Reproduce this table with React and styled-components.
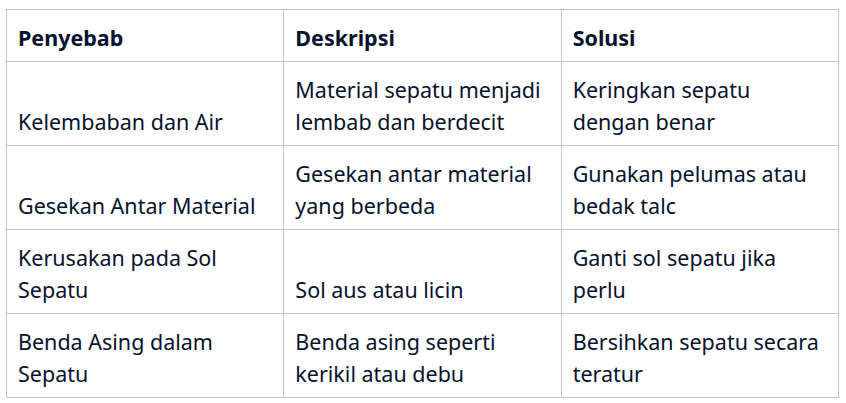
import React from "react";
import styled, { createGlobalStyle } from "styled-components";

const GlobalStyle = createGlobalStyle`
  body {
    margin: 0;
    background: #ffffff;
    font-family: "Noto Sans", "Open Sans", sans-serif;
  }
`;

const rows = [
  ["Kelembaban dan Air", "Material sepatu menjadi lembab dan berdecit", "Keringkan sepatu dengan benar"],
  ["Gesekan Antar Material", "Gesekan antar material yang berbeda", "Gunakan pelumas atau bedak talc"],
  ["Kerusakan pada Sol Sepatu", "Sol aus atau licin", "Ganti sol sepatu jika perlu"],
  ["Benda Asing dalam Sepatu", "Benda asing seperti kerikil atau debu", "Bersihkan sepatu secara teratur"],
];

export default function App() {
  return (
    <>
      <GlobalStyle />
      <Page>
        <Table>
          <thead>
            <tr>
              <HeadCell>Penyebab</HeadCell>
              <HeadCell>Deskripsi</HeadCell>
              <HeadCell>Solusi</HeadCell>
            </tr>
          </thead>
          <tbody>
            {rows.map((row, i) => (
              <tr key={i}>
                {row.map((text, j) => (
                  <Cell key={j}>{text}</Cell>
                ))}
              </tr>
            ))}
          </tbody>
        </Table>
      </Page>
    </>
  );
}

const Page = styled.div`
  padding: 9px 0 0 6px;
`;

const Table = styled.table`
  width: 833px;
  table-layout: fixed;
  border-collapse: collapse;
  color: #06122e;
`;

const HeadCell = styled.th`
  border: 1px solid #c4c4c4;
  padding: 12px 11px 8px;
  text-align: left;
  font-size: 21.5px;
  font-weight: 700;
  line-height: 31px;
  vertical-align: bottom;
`;

const Cell = styled.td`
  border: 1px solid #c4c4c4;
  padding: 12px 11px 7px;
  font-size: 21.5px;
  line-height: 32px;
  vertical-align: bottom;
`;
